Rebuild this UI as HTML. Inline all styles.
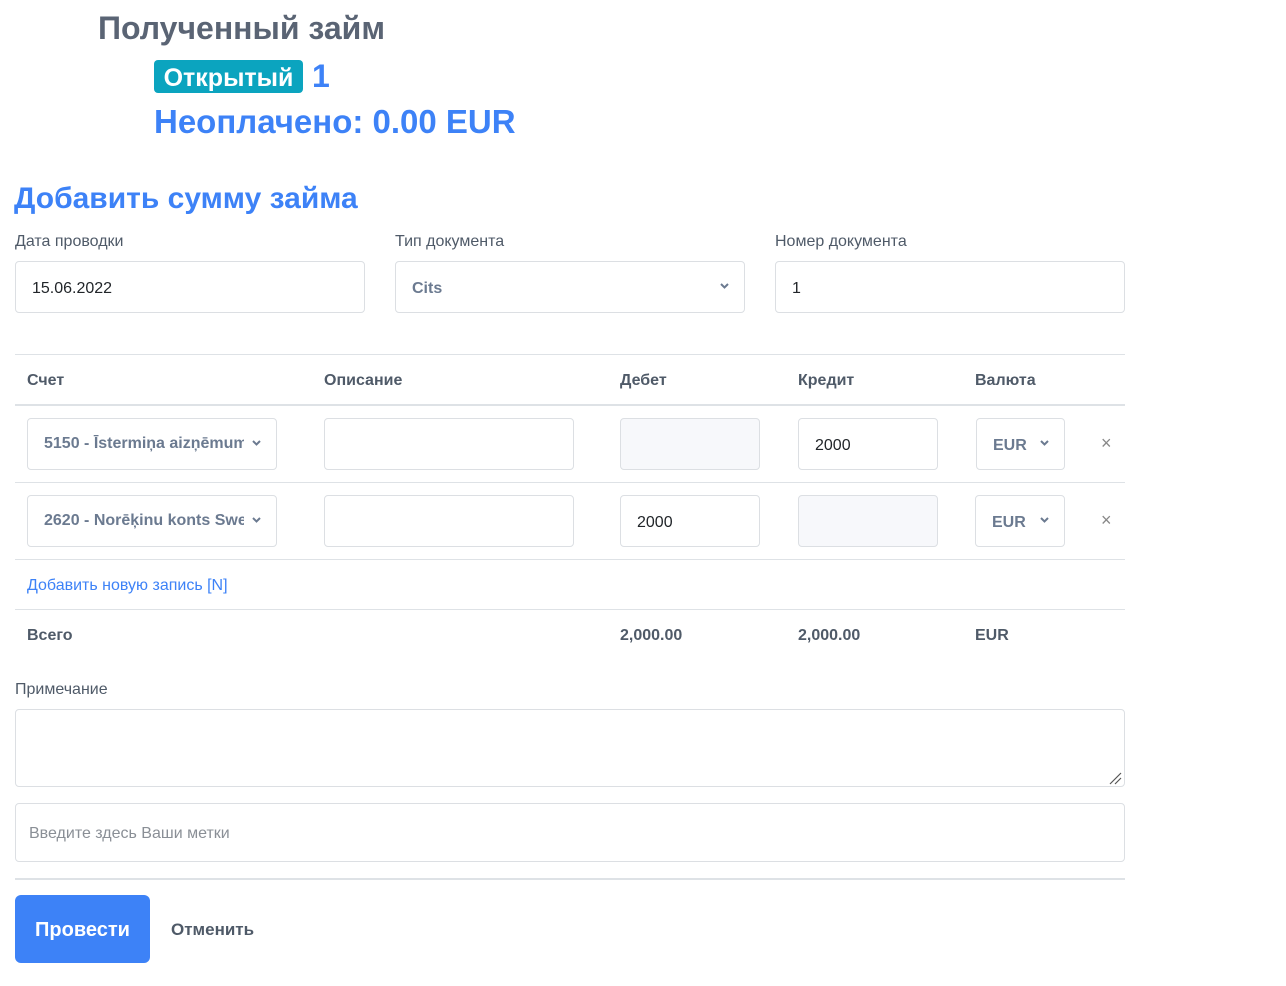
<!DOCTYPE html>
<html><head><meta charset="utf-8"><style>
*{box-sizing:border-box;margin:0;padding:0}
body{width:1286px;height:986px;background:#fff;font-family:"Liberation Sans","Noto Sans CJK SC",sans-serif;position:relative;overflow:hidden;color:#212529}
.a{position:absolute;white-space:nowrap}
.inp{position:absolute;border:1px solid #dcdfe3;border-radius:4px;background:#fff;font-size:16px;padding-left:16px;padding-top:3px;display:flex;align-items:center}
.sel{color:#6b7a90;font-weight:bold}
.lbl{position:absolute;font-size:16px;color:#4f5a68}
.hline{position:absolute;left:15px;width:1110px;height:1px;background:#dee2e6}
.th{position:absolute;top:372px;font-size:16px;font-weight:bold;color:#4f5a68}
.chev{position:absolute;width:9px;height:6px}
.x{position:absolute;font-size:18px;color:#888}
.tot{position:absolute;top:627px;font-size:16px;font-weight:bold;color:#4f5a68}
.cl{overflow:hidden;white-space:nowrap;display:block;line-height:50px;padding-top:0}
</style></head><body>
<svg width="0" height="0" style="position:absolute"><defs><path id="cv" d="M1 1L4.5 4.5L8 1" stroke="#6b7a90" stroke-width="2" fill="none"/></defs></svg>
<div class="a" style="left:98px;top:10px;font-size:32px;font-weight:bold;color:#5a6474">Полученный займ</div>
<div class="a" style="left:154px;top:60px;width:149px;height:33px;background:#0ba4bf;border-radius:4px;color:#fff;font-size:25px;font-weight:bold;text-align:center;line-height:36px">Открытый</div>
<div class="a" style="left:312px;top:58px;font-size:32px;font-weight:bold;color:#3d82f7">1</div>
<div class="a" style="left:154px;top:103px;font-size:33px;font-weight:bold;color:#3d82f7">Неоплачено: 0.00 EUR</div>
<div class="a" style="left:14px;top:182px;font-size:30px;font-weight:bold;color:#3d82f7">Добавить сумму займа</div>

<div class="lbl" style="left:15px;top:233px">Дата проводки</div>
<div class="lbl" style="left:395px;top:233px">Тип документа</div>
<div class="lbl" style="left:775px;top:233px">Номер документа</div>
<div class="inp" style="left:15px;top:261px;width:350px;height:52px">15.06.2022</div>
<div class="inp sel" style="left:395px;top:261px;width:350px;height:52px">Cits</div>
<svg class="chev" style="left:720px;top:283px"><use href="#cv"/></svg>
<div class="inp" style="left:775px;top:261px;width:350px;height:52px">1</div>

<div class="hline" style="top:354px"></div>
<div class="th" style="left:27px">Счет</div>
<div class="th" style="left:324px">Описание</div>
<div class="th" style="left:620px">Дебет</div>
<div class="th" style="left:798px">Кредит</div>
<div class="th" style="left:975px">Валюта</div>
<div class="hline" style="top:404px;height:2px"></div>

<div class="inp sel cl" style="left:27px;top:418px;width:250px;height:52px"><span style="display:inline-block;width:200px;overflow:hidden;vertical-align:top">5150 - Īstermiņa aizņēmums</span></div>
<svg class="chev" style="left:252px;top:440px"><use href="#cv"/></svg>
<div class="inp" style="left:324px;top:418px;width:250px;height:52px"></div>
<div class="inp" style="left:620px;top:418px;width:140px;height:52px;background:#f7f8fb"></div>
<div class="inp" style="left:798px;top:418px;width:140px;height:52px">2000</div>
<div class="inp sel" style="left:976px;top:418px;width:89px;height:52px">EUR</div>
<svg class="chev" style="left:1040px;top:440px"><use href="#cv"/></svg>
<div class="x" style="left:1101px;top:433px">×</div>
<div class="hline" style="top:482px"></div>

<div class="inp sel cl" style="left:27px;top:495px;width:250px;height:52px"><span style="display:inline-block;width:200px;overflow:hidden;vertical-align:top">2620 - Norēķinu konts Swedbank</span></div>
<svg class="chev" style="left:252px;top:517px"><use href="#cv"/></svg>
<div class="inp" style="left:324px;top:495px;width:250px;height:52px"></div>
<div class="inp" style="left:620px;top:495px;width:140px;height:52px">2000</div>
<div class="inp" style="left:798px;top:495px;width:140px;height:52px;background:#f7f8fb"></div>
<div class="inp sel" style="left:975px;top:495px;width:90px;height:52px">EUR</div>
<svg class="chev" style="left:1040px;top:517px"><use href="#cv"/></svg>
<div class="x" style="left:1101px;top:510px">×</div>
<div class="hline" style="top:559px"></div>

<div class="a" style="left:27px;top:577px;font-size:16px;color:#3d82f7">Добавить новую запись [N]</div>
<div class="hline" style="top:609px"></div>
<div class="tot" style="left:27px">Всего</div>
<div class="tot" style="left:620px">2,000.00</div>
<div class="tot" style="left:798px">2,000.00</div>
<div class="tot" style="left:975px">EUR</div>

<div class="lbl" style="left:15px;top:681px">Примечание</div>
<div class="inp" style="left:15px;top:709px;width:1110px;height:78px"></div>
<svg class="a" style="left:1108px;top:771px" width="14" height="14"><path d="M2 13L13 2M7 13L13 7" stroke="#555" stroke-width="1.2"/></svg>
<div class="inp" style="left:15px;top:803px;width:1110px;height:59px;color:#8a8f96;padding-left:13px">Введите здесь Ваши метки</div>
<div class="hline" style="top:878px;height:2px"></div>
<div class="a" style="left:15px;top:895px;width:135px;height:68px;background:#3d82f7;border-radius:6px;color:#fff;font-size:20px;font-weight:bold;text-align:center;line-height:70px">Провести</div>
<div class="a" style="left:171px;top:920px;font-size:17px;font-weight:bold;color:#4f5a68">Отменить</div>
</body></html>
